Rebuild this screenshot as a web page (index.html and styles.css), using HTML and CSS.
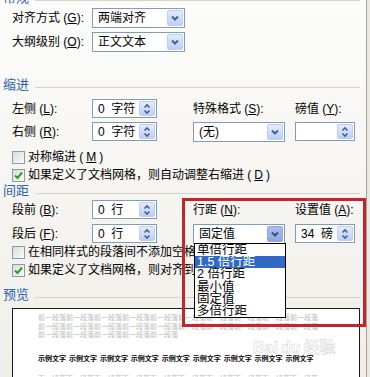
FILE: index.html
```html
<!DOCTYPE html>
<html lang="zh-CN">

<head>
	<meta charset="utf-8">
	<title>段落</title>
	<link rel="stylesheet" href="styles.css">
</head>

<body>
	<div class="dialog">
		<div class="head head-top">常规</div>
		<div class="general">
			<span class="lbl">对齐方式 (<u>G</u>):</span>
			<div class="combo"><span class="val">两端对齐</span><span class="btn"><svg width="10" height="8" viewBox="0 0 10 8"><path d="M2 2.5 L5 5.5 L8 2.5" fill="none" stroke="#4a5f8c" stroke-width="2"/></svg></span></div>
			<span class="lbl">大纲级别 (<u>O</u>):</span>
			<div class="combo"><span class="val">正文文本</span><span class="btn"><svg width="10" height="8" viewBox="0 0 10 8"><path d="M2 2.5 L5 5.5 L8 2.5" fill="none" stroke="#4a5f8c" stroke-width="2"/></svg></span></div>
		</div>

		<div class="head head-indent">缩进</div>
		<div class="grid">
			<span class="lbl">左侧 (<u>L</u>):</span>
			<div class="spin"><span class="val">0&nbsp; 字符</span><span class="btn"><svg width="10" height="14" viewBox="0 0 10 14"><path d="M2.5 5.5 L5 3 L7.5 5.5 M2.5 8.5 L5 11 L7.5 8.5" fill="none" stroke="#4a5f8c" stroke-width="1.6"/></svg></span></div>
			<span></span>
			<span class="lbl">特殊格式 (<u>S</u>):</span>
			<span></span>
			<span class="lbl">磅值 (<u>Y</u>):</span>

			<span class="lbl">右侧 (<u>R</u>):</span>
			<div class="spin"><span class="val">0&nbsp; 字符</span><span class="btn"><svg width="10" height="14" viewBox="0 0 10 14"><path d="M2.5 5.5 L5 3 L7.5 5.5 M2.5 8.5 L5 11 L7.5 8.5" fill="none" stroke="#4a5f8c" stroke-width="1.6"/></svg></span></div>
			<span></span>
			<div class="combo"><span class="val">(无)</span><span class="btn"><svg width="10" height="8" viewBox="0 0 10 8"><path d="M2 2.5 L5 5.5 L8 2.5" fill="none" stroke="#4a5f8c" stroke-width="2"/></svg></span></div>
			<span></span>
			<div class="spin"><span class="val"></span><span class="btn"><svg width="10" height="14" viewBox="0 0 10 14"><path d="M2.5 5.5 L5 3 L7.5 5.5 M2.5 8.5 L5 11 L7.5 8.5" fill="none" stroke="#4a5f8c" stroke-width="1.6"/></svg></span></div>
		</div>
		<div class="check check-first"><span class="box"></span>对称缩进 (<u>M</u>)</div>
		<div class="check"><span class="box"><svg width="11" height="11" viewBox="0 0 11 11"><path d="M2 5.5 L4.5 8 L9 2.5" fill="none" stroke="#21a121" stroke-width="2"/></svg></span>如果定义了文档网格，则自动调整右缩进 (<u>D</u>)</div>

		<div class="head head-space">间距</div>
		<div class="grid grid-space">
			<span class="lbl">段前 (<u>B</u>):</span>
			<div class="spin"><span class="val">0&nbsp; 行</span><span class="btn"><svg width="10" height="14" viewBox="0 0 10 14"><path d="M2.5 5.5 L5 3 L7.5 5.5 M2.5 8.5 L5 11 L7.5 8.5" fill="none" stroke="#4a5f8c" stroke-width="1.6"/></svg></span></div>
			<span></span>
			<span class="lbl">行距 (<u>N</u>):</span>
			<span></span>
			<span class="lbl">设置值 (<u>A</u>):</span>

			<span class="lbl">段后 (<u>F</u>):</span>
			<div class="spin"><span class="val">0&nbsp; 行</span><span class="btn"><svg width="10" height="14" viewBox="0 0 10 14"><path d="M2.5 5.5 L5 3 L7.5 5.5 M2.5 8.5 L5 11 L7.5 8.5" fill="none" stroke="#4a5f8c" stroke-width="1.6"/></svg></span></div>
			<span></span>
			<div class="combo"><span class="val">固定值</span><span class="btn btn-pressed"><svg width="10" height="8" viewBox="0 0 10 8"><path d="M2 2.5 L5 5.5 L8 2.5" fill="none" stroke="#3d4f7a" stroke-width="2"/></svg></span></div>
			<span></span>
			<div class="spin"><span class="val">34&nbsp; 磅</span><span class="btn"><svg width="10" height="14" viewBox="0 0 10 14"><path d="M2.5 5.5 L5 3 L7.5 5.5 M2.5 8.5 L5 11 L7.5 8.5" fill="none" stroke="#4a5f8c" stroke-width="1.6"/></svg></span></div>
		</div>
		<div class="check"><span class="box"></span>在相同样式的段落间不添加空格 (<u>C</u>)</div>
		<div class="check"><span class="box"><svg width="11" height="11" viewBox="0 0 11 11"><path d="M2 5.5 L4.5 8 L9 2.5" fill="none" stroke="#21a121" stroke-width="2"/></svg></span>如果定义了文档网格，则对齐到网格 (<u>W</u>)</div>

		<div class="head head-preview">预览</div>
		<div class="preview">
			<div class="prev-line">前一段落前一段落前一段落前一段落前一段落前一段落前一段落前一段落前一段落前一段落</div>
			<div class="prev-line">前一段落前一段落前一段落前一段落前一段落前一段落前一段落前一段落前一段落前一段落</div>
			<div class="prev-line">前一段落前一段落前一段落前一段落前一段落</div>
			<div class="sample">示例文字 示例文字 示例文字 示例文字 示例文字 示例文字 示例文字 示例文字 示例文字</div>
			<div class="prev-line next-line">下一段落下一段落下一段落下一段落下一段落下一段落下一段落下一段落下一段落下一段落</div>
		</div>

		<div class="watermark">Bai<span class="du">du</span>经验</div>

		<ul class="droplist">
			<li>单倍行距</li>
			<li class="sel">1.5 倍行距</li>
			<li>2 倍行距</li>
			<li>最小值</li>
			<li>固定值</li>
			<li>多倍行距</li>
		</ul>

		<div class="highlight"></div>
	</div>
</body>

</html>
```

FILE: styles.css
```css
* {
	box-sizing: border-box;
}
body {
	margin: 0;
	background-color: #e9e8e2;
	color: #000;
	font-family: "Liberation Sans", "Noto Sans CJK SC", sans-serif;
	font-size: 12px;
	overflow: hidden;
}
u {
	text-decoration: underline;
	text-underline-offset: 1px;
}
.dialog {
	position: relative;
	width: 367px;
	height: 377px;
	background: linear-gradient(#fcfcfb, #f5f4f0 55%, #efeee9);
	border-right: 1px solid #a3a29b;
	overflow: hidden;
}

/* section titles with rule */
.head {
	display: flex;
	align-items: center;
	width: 357px;
	height: 13px;
	margin-left: 3px;
	color: #2f62ad;
	font-size: 13px;
	line-height: 13px;
}
.head::after {
	content: "";
	flex: 1;
	margin: 5px 0 0 6px;
	border-top: 1px solid #d6d4c8;
}
.head-top {
	margin-top: -9px;
}
.head-indent {
	margin-top: 26px;
}
.head-preview {
	margin-top: 9px;
}

.lbl {
	white-space: nowrap;
	line-height: 14px;
}

.general {
	display: grid;
	grid-template-columns: 80px 93px;
	grid-auto-rows: 20px;
	row-gap: 4px;
	align-items: center;
	margin: 4px 0 0 12px;
}
.grid {
	display: grid;
	grid-template-columns: 80px 65px 36px 92px 10px 60px;
	grid-template-rows: 19px 19px;
	row-gap: 4px;
	align-items: center;
	margin: 8px 0 0 12px;
}
.grid-space {
	margin-top: 3px;
	row-gap: 5px;
}

/* fields */
.combo, .spin {
	display: flex;
	align-items: center;
	height: 20px;
	padding: 1px 1px 1px 5px;
	background-color: #fff;
	border: 1px solid #7f9db9;
	line-height: 16px;
	white-space: nowrap;
}
.spin {
	height: 19px;
}
.val {
	flex: 1;
}
.btn {
	display: flex;
	align-items: center;
	justify-content: center;
	width: 16px;
	height: 100%;
	border: 1px solid #bfcdef;
	border-radius: 2px;
	background: linear-gradient(#e4ecfe, #bccff8);
}
.btn-pressed {
	border-color: #94a8dc;
	background: linear-gradient(#a9bdf0, #8ea6e8);
}

/* checkboxes */
.check {
	display: flex;
	align-items: center;
	gap: 3px;
	height: 18px;
	margin-left: 12px;
	white-space: nowrap;
	line-height: 14px;
}
.check-first {
	margin-top: 7px;
}
.box {
	display: flex;
	align-items: center;
	justify-content: center;
	width: 13px;
	height: 13px;
	border: 1px solid #8a9bb1;
	background: linear-gradient(135deg, #dcdcd6, #fbfbfa);
}

/* preview */
.preview {
	width: 348px;
	height: 80px;
	margin: 7px 0 0 12px;
	padding: 5px 0 0 25px;
	background-color: #fff;
	border: 1px solid #1a1a1a;
}
.prev-line {
	height: 8.5px;
	font-size: 7px;
	line-height: 8.5px;
	color: #b9b9b9;
	white-space: nowrap;
}
.sample {
	margin-top: 14px;
	font-size: 7px;
	line-height: 9px;
	font-weight: bold;
	word-spacing: 1px;
	white-space: nowrap;
}
.next-line {
	margin-top: 12px;
}

/* overlays */
.watermark {
	position: absolute;
	left: 253px;
	top: 334px;
	font-size: 16px;
	font-weight: bold;
	color: rgba(255, 255, 255, 0.8);
	-webkit-text-stroke: 0.6px #d8d8d8;
}
.du {
	margin: 0 3px;
}
.droplist {
	position: absolute;
	left: 194px;
	top: 243px;
	width: 92px;
	height: 75px;
	margin: 0;
	padding: 0;
	list-style: none;
	background-color: #fff;
	border: 1px solid #000;
	font-size: 12.5px;
}
.droplist li {
	height: 12.2px;
	padding-left: 2px;
	line-height: 12.2px;
	white-space: nowrap;
}
.droplist .sel {
	background-color: #316ac5;
	color: #fff;
}
.highlight {
	position: absolute;
	left: 182px;
	top: 198px;
	width: 184px;
	height: 129px;
	border: 3px solid #c0262c;
}
```
